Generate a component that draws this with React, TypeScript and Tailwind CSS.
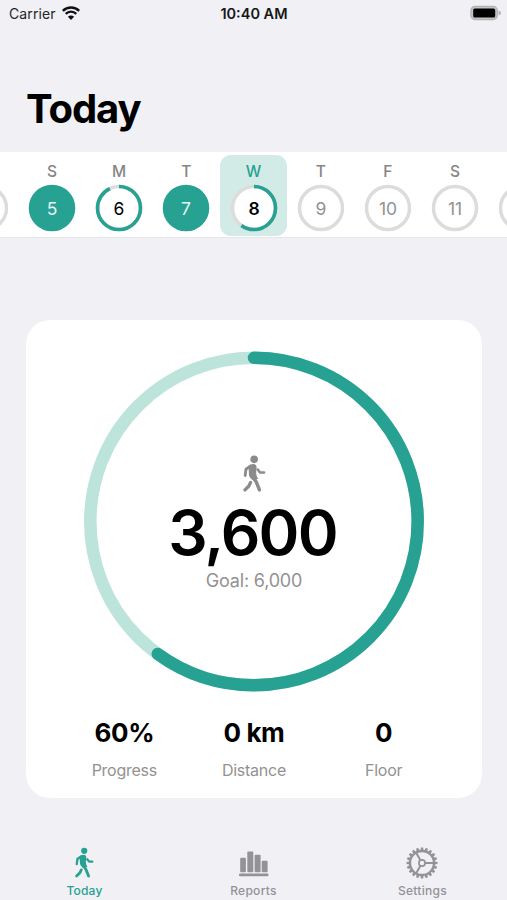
const TEAL = '#26a192';

type Day = { letter: string; date: string; progress: number; selected?: boolean };

const days: Day[] = [
  { letter: '', date: '', progress: 0 },
  { letter: 'S', date: '5', progress: 1 },
  { letter: 'M', date: '6', progress: 0.93 },
  { letter: 'T', date: '7', progress: 1 },
  { letter: 'W', date: '8', progress: 0.6, selected: true },
  { letter: 'T', date: '9', progress: 0 },
  { letter: 'F', date: '10', progress: 0 },
  { letter: 'S', date: '11', progress: 0 },
  { letter: '', date: '', progress: 0 },
];

const stats = [
  { value: '60%', label: 'Progress' },
  { value: '0 km', label: 'Distance' },
  { value: '0', label: 'Floor' },
];

function Walker({ className }: { className: string }) {
  return (
    <svg viewBox="0 0 70 112" className={className} fill="none" stroke="currentColor" strokeLinecap="round" strokeLinejoin="round">
      <circle cx="34" cy="13" r="11.500" fill="currentColor" stroke="none" />
      <path d="M17 34Q21 27 31 27Q41 27 41.500 36L40 56Q41 65 46 73L29 76Q17 67 18 57Z" fill="currentColor" stroke="none" />
      <path d="M22 34L9 43L6.500 62" strokeWidth="8.500" />
      <path d="M45 44L52 53L64 53" strokeWidth="8" />
      <path d="M29 65L40 81L50 106" strokeWidth="10.500" />
      <path d="M23 83L18 94L6 106" strokeWidth="10" />
    </svg>
  );
}

function Wifi() {
  return (
    <svg viewBox="0 0 18 14" className="h-[14px] w-[18px]" fill="none" stroke="#111">
      <path d="M.8 4.900A11.600 11.600 0 0 1 17.200 4.900" strokeWidth="2.500" />
      <path d="M3.700 7.900A7.500 7.500 0 0 1 14.300 7.900" strokeWidth="2.300" />
      <path d="M9 14L5.900 10.800A4.400 4.400 0 0 1 12.100 10.800Z" fill="#111" stroke="none" />
    </svg>
  );
}

function Battery() {
  return (
    <svg viewBox="0 0 32 16" className="h-4 w-8">
      <rect x=".9" y="1.400" width="26.400" height="13.200" rx="4" fill="#c4c4c7" stroke="#b2b2b5" strokeWidth="1.200" />
      <rect x="3.200" y="3.600" width="22" height="8.800" rx="1.500" fill="#000" />
      <path d="M28.600 5.500Q31 6.200 31 8T28.600 10.500Z" fill="#b2b2b5" />
    </svg>
  );
}

function BarsIcon() {
  return (
    <svg viewBox="0 0 30 26" className="h-[26px] w-[30px]" fill="currentColor">
      <rect x="1.200" y="6.800" width="5.700" height="14.400" rx="1" />
      <rect x="8.300" y=".5" width="6" height="20.700" rx="1" />
      <rect x="15.600" y="3.700" width="6" height="17.500" rx="1" />
      <rect x="22.700" y="9.700" width="5.900" height="11.500" rx="1" />
      <rect x="0" y="22.600" width="29.500" height="2.700" rx="1" />
    </svg>
  );
}

const spokes = Array.from({ length: 20 }, (_, i) => i * 18);

function GearIcon() {
  return (
    <svg viewBox="-16 -16 32 32" className="h-8 w-8" fill="none" stroke="currentColor">
      {spokes.map((angle) => (
        <path key={angle} d="M-1.600 -12.500L-1.100 -15.500H1.100L1.600 -12.500Z" fill="currentColor" stroke="none" transform={`rotate(${angle})`} />
      ))}
      <circle r="12" strokeWidth="2.300" />
      <circle r="3.100" strokeWidth="1.700" />
      <path d="M3.300 0H12M-1.700 -2.900L-6 -10.400M-1.700 2.900L-6 10.400" strokeWidth="2" />
    </svg>
  );
}

function DayCell({ day }: { day: Day }) {
  const full = day.progress === 1;
  const numberTone = full
    ? 'fill-[#e5f5f2] font-normal'
    : day.selected
      ? 'fill-black font-semibold'
      : day.progress > 0
        ? 'fill-black font-normal'
        : 'fill-[#929292] font-normal';
  return (
    <div className={`flex h-[81px] w-[67.200px] shrink-0 flex-col items-center rounded-[11px] pt-[7px] ${day.selected ? 'bg-[#d3ebe6] text-[#26a192]' : 'text-[#858585]'}`}>
      <span className="h-5 text-[15.500px] leading-5 font-medium">{day.letter}</span>
      <svg viewBox="-24 -24 48 48" className="mt-[2px] h-12 w-12">
        <circle r="21.500" fill={full ? TEAL : '#fff'} stroke={full ? TEAL : '#dcdcdc'} strokeWidth="3.500" />
        {day.progress > 0 && !full && (
          <circle r="21.500" fill="none" stroke={TEAL} strokeWidth="3.600" pathLength="100" strokeDasharray={`${day.progress * 100} 100`} transform="rotate(-90)" />
        )}
        <text y="6.600" textAnchor="middle" className={`text-[17.500px] ${numberTone}`}>{day.date}</text>
      </svg>
    </div>
  );
}

export default function App() {
  return (
    <div className="flex h-[900px] w-[507px] flex-col overflow-hidden bg-[#f0f0f5] font-[Inter,sans-serif] text-black">
      <header className="grid h-7 shrink-0 grid-cols-3 items-center pr-[5px] pb-[2px] pl-[9px] text-[14px]">
        <div className="flex items-center gap-[6px] text-[#252525]">
          <span className="tracking-[0.1px]">Carrier</span>
          <Wifi />
        </div>
        <span className="-ml-[3px] pt-[2px] text-center text-[14.500px] font-semibold text-[#171717]">10:40 AM</span>
        <div className="flex justify-end"><Battery /></div>
      </header>

      <h1 className="mt-[56px] h-[50px] shrink-0 pl-[26px] text-[40px] leading-[50px] font-bold tracking-[-1.100px]">Today</h1>

      <section className="mt-[18px] flex h-[86px] shrink-0 items-end justify-center overflow-hidden border-b border-[#e6e6ea] bg-white pb-[1px]">
        {days.map((day, i) => <DayCell key={i} day={day} />)}
      </section>

      <main className="mx-[26px] mt-[82px] flex h-[478px] w-[456px] shrink-0 flex-col items-center rounded-[24px] bg-white pt-[31px]">
        <div className="grid h-[341px] w-[340px] place-items-center">
          <svg viewBox="-170 -170.500 340 341" className="col-start-1 row-start-1 h-[341px] w-[340px]" fill="none" strokeWidth="12.500">
            <circle r="163.700" stroke="#bce4da" />
            <circle r="163.700" stroke={TEAL} pathLength="100" strokeDasharray="60 100" strokeLinecap="round" transform="rotate(-90)" />
          </svg>
          <div className="col-start-1 row-start-1 flex flex-col items-center pt-[4px]">
            <Walker className="h-[37px] w-[23px] text-[#8b8b8b]" />
            <span className="mt-[8px] mr-[3px] h-[66px] text-[62px] leading-[66px] font-semibold tracking-[-1.800px]">3,600</span>
            <span className="mt-[3px] text-[18px] leading-6 tracking-[-0.200px] text-[#929292]">Goal: 6,000</span>
          </div>
        </div>
        <div className="mt-[24px] grid w-[389px] grid-cols-3 text-center">
          {stats.map((s) => (
            <div key={s.label} className="flex flex-col">
              <span className="text-[26px] leading-[34px] font-bold tracking-[-0.400px]">{s.value}</span>
              <span className="mt-[10px] text-[16px] leading-5 tracking-[-0.250px] text-[#929292]">{s.label}</span>
            </div>
          ))}
        </div>
      </main>

      <nav className="mt-[46px] grid h-14 shrink-0 grid-cols-3 text-[12px] leading-[14px] font-medium text-[#929297]">
        <div className="flex flex-col items-center text-[#26a192]">
          <div className="flex h-[40px] items-start pt-[3px]"><Walker className="h-[31px] w-[19px]" /></div>
          <span className="tracking-[0.200px]">Today</span>
        </div>
        <div className="flex flex-col items-center">
          <div className="flex h-[40px] items-center pb-[1px]"><BarsIcon /></div>
          <span className="tracking-[0.300px]">Reports</span>
        </div>
        <div className="flex flex-col items-center">
          <div className="flex h-[40px] items-center pr-[1px] pb-[2px]"><GearIcon /></div>
          <span className="tracking-[0.300px]">Settings</span>
        </div>
      </nav>
    </div>
  );
}
